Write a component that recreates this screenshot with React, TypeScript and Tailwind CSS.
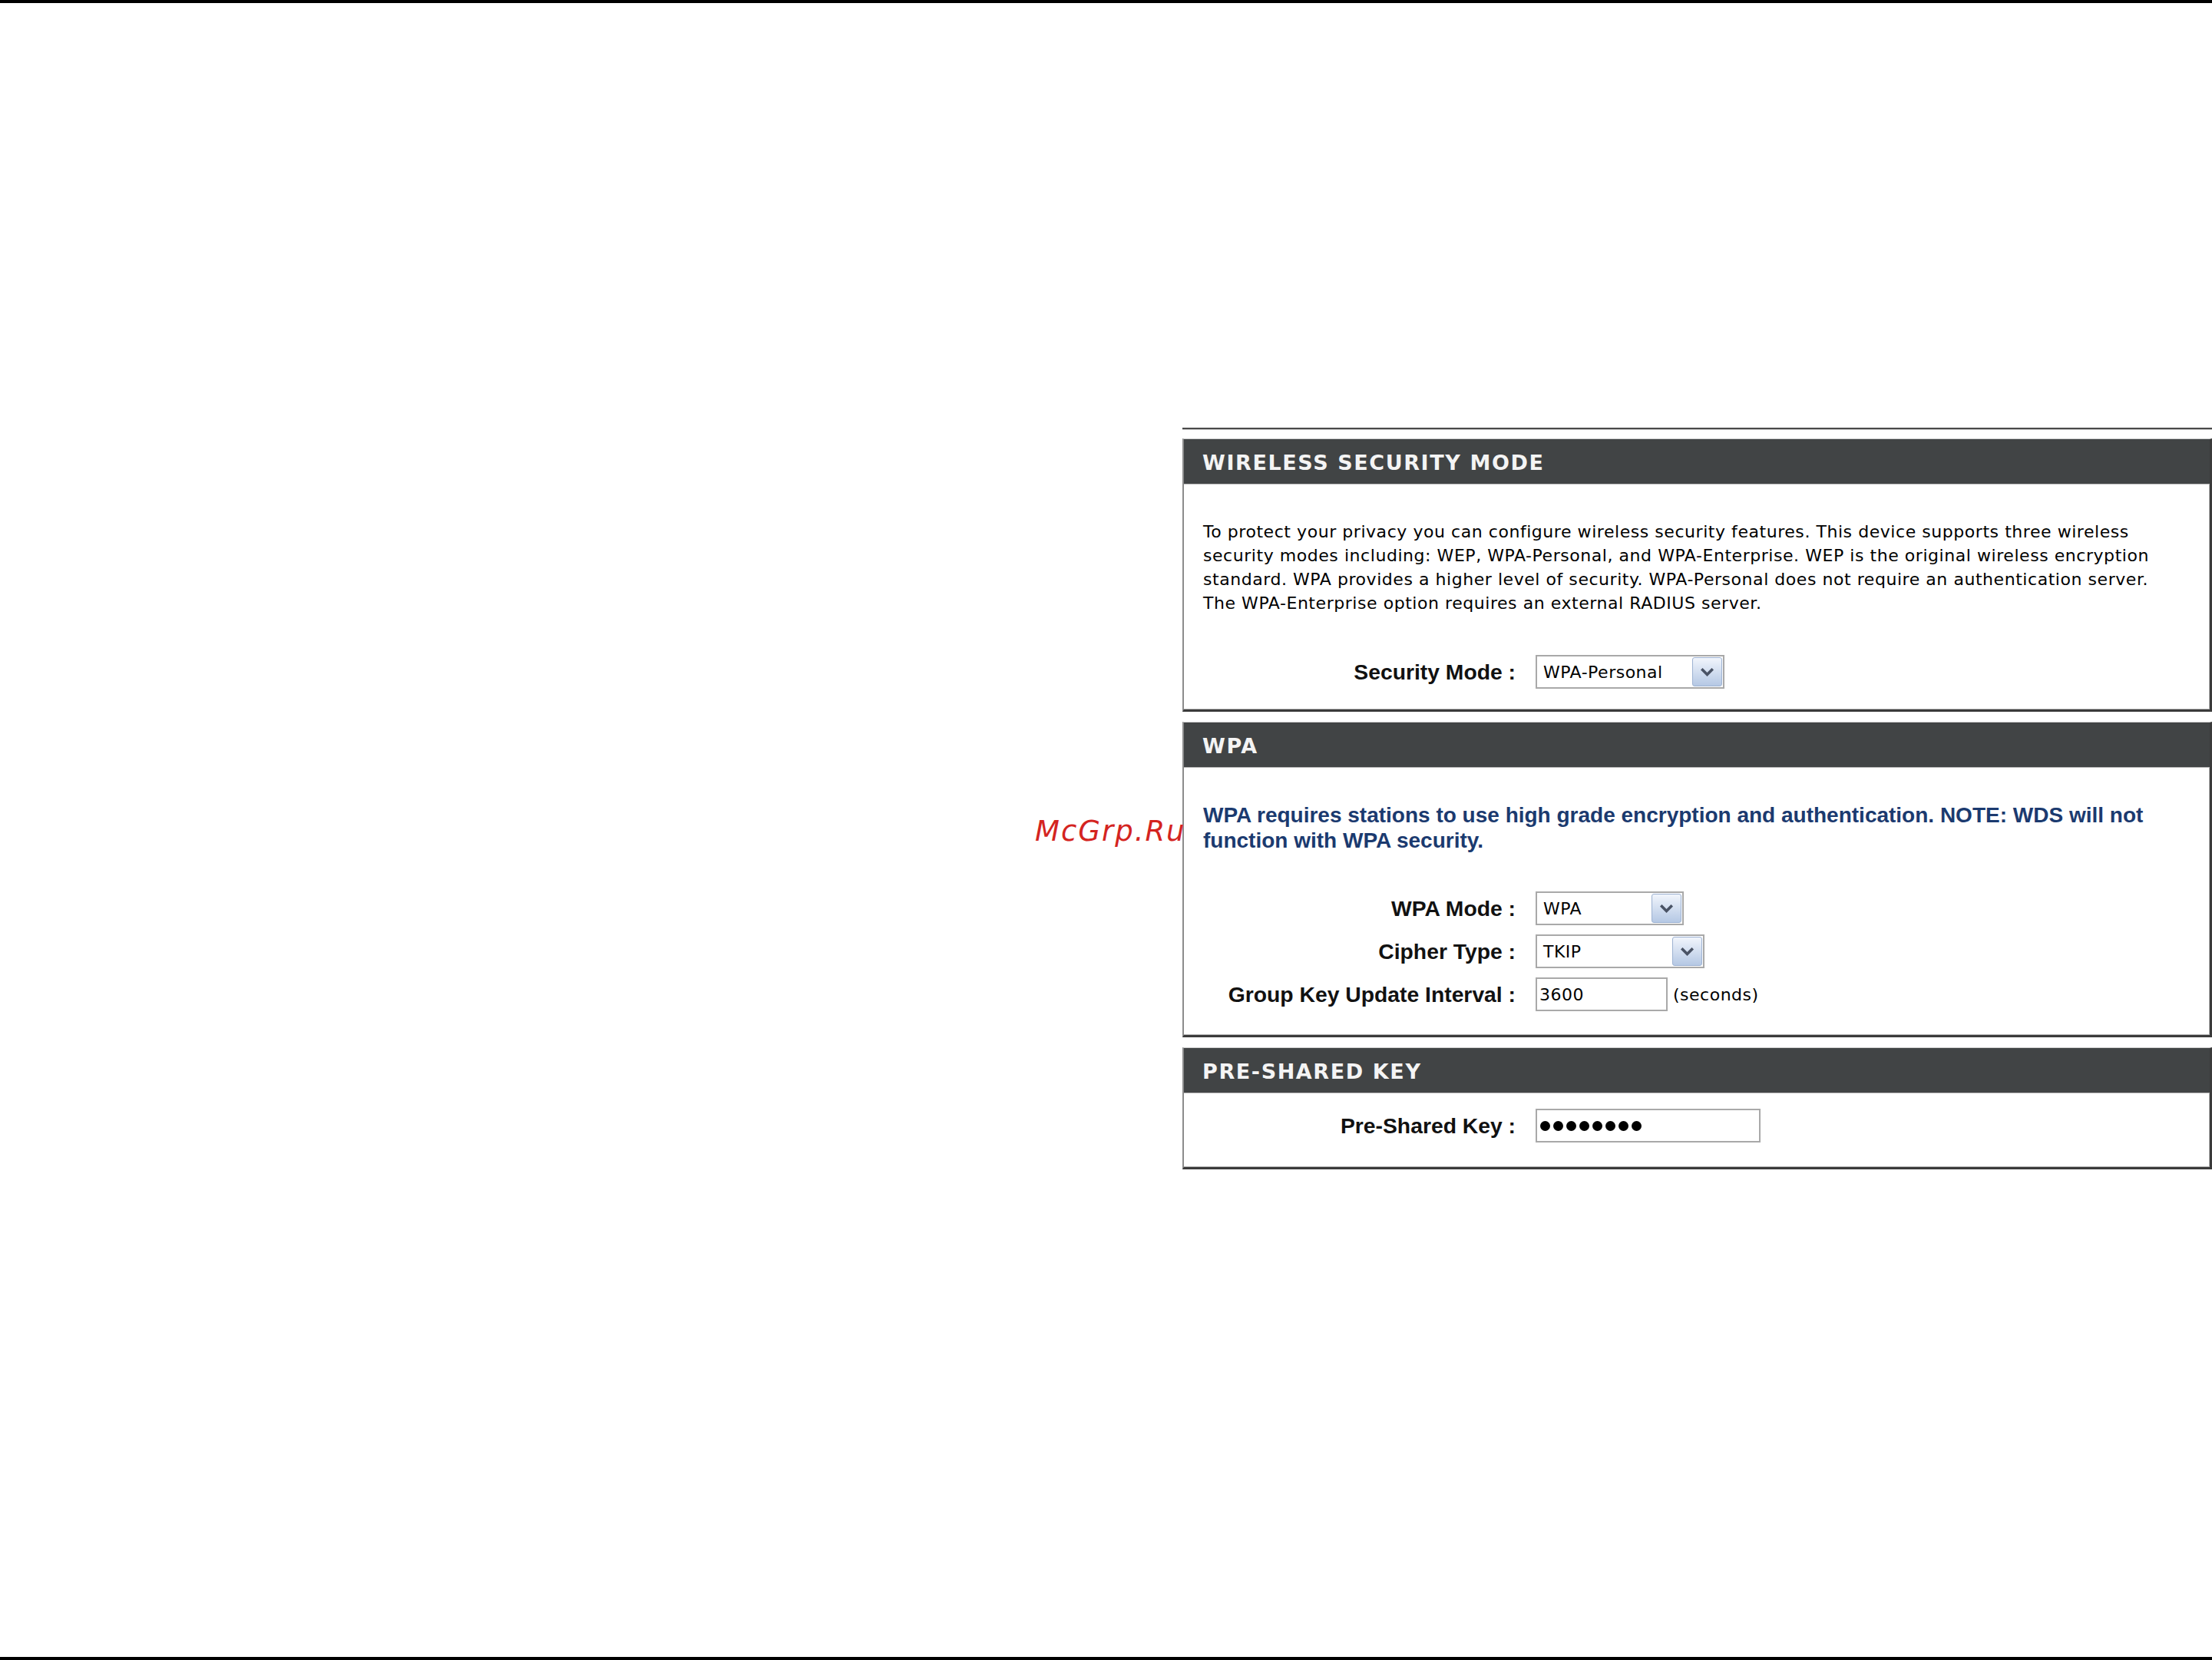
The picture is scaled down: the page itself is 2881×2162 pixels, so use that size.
import React from "react";

const SANS = "font-['DejaVu_Sans','Liberation_Sans',sans-serif]";
const LABEL = "font-['Liberation_Sans',Arial,sans-serif] font-bold text-[28.3px] text-[#111111] text-right leading-none";

function Chevron() {
  return (
    <svg width="17" height="11" viewBox="0 0 17 11" aria-hidden="true">
      <path d="M2.5 2.5 L8.5 8.5 L14.5 2.5" fill="none" stroke="#4a5365" strokeWidth="3.6" strokeLinecap="square" />
    </svg>
  );
}

function SelectBox({ value, className }: { value: string; className: string }) {
  return (
    <div className={`${className} h-[44px] border-2 border-[#a9a9a9] bg-white flex items-stretch p-[1px]`}>
      <span className={`flex-1 flex items-center pl-[7px] text-[22px] tracking-[0.5px] text-black ${SANS}`}>{value}</span>
      <span className="w-[39px] rounded-[3px] border border-[#9db2d2] bg-gradient-to-b from-[#f1f5fc] to-[#b5c8e4] flex items-center justify-center">
        <Chevron />
      </span>
    </div>
  );
}

function TextBox({ className, children }: { className: string; children: React.ReactNode }) {
  return (
    <div className={`${className} h-[44px] border-2 border-[#a9a9a9] bg-white flex items-center text-[22px] tracking-[0.5px] text-black ${SANS}`}>
      {children}
    </div>
  );
}

function Panel({ title, bodyClass, children }: { title: string; bodyClass: string; children: React.ReactNode }) {
  return (
    <section className="border-t border-t-[#cfcfcf] border-l-2 border-l-[#8c8c8c] border-r-[3px] border-r-[#3b3b3b] border-b-[3px] border-b-[#3b3b3b] shadow-[inset_-1px_-1px_0_#b3b3b3] bg-white">
      <h2 className={`h-[59px] bg-[#414445] border-b border-b-[#b9b9b9] flex items-center pl-[24px] pt-[4px] text-[27px] font-bold tracking-[1.6px] text-[#f4f4f4] ${SANS}`}>
        {title}
      </h2>
      <div className={bodyClass}>{children}</div>
    </section>
  );
}

function Row({ label, children }: { label: string; children: React.ReactNode }) {
  return (
    <div className="grid grid-cols-[432px_1fr] gap-x-[26px] items-center">
      <span className={LABEL}>{label}</span>
      <div className="flex items-center">{children}</div>
    </div>
  );
}

export default function App() {
  return (
    <div className="relative w-[2881px] h-[2162px] bg-white flex flex-col overflow-hidden">
      <div className="h-[4px] bg-black" />

      <main className="flex-1 grid grid-cols-[1540px_1fr]">
        <div />
        <div className="pt-[553px] flex flex-col">
          <div className="h-[2px] bg-[#4a4a4a] shadow-[0_1px_0_#c6c6c6]" />

          <div className="mt-[12px] flex flex-col gap-[13px]">
            <Panel title="WIRELESS SECURITY MODE" bodyClass="pt-[46px] pb-[27px]">
              <p className={`px-[25px] text-[22px] leading-[31px] tracking-[0.55px] text-black ${SANS}`}>
                To protect your privacy you can configure wireless security features. This device supports three wireless
                <br />
                security modes including: WEP, WPA-Personal, and WPA-Enterprise. WEP is the original wireless encryption
                <br />
                standard. WPA provides a higher level of security. WPA-Personal does not require an authentication server.
                <br />
                The WPA-Enterprise option requires an external RADIUS server.
              </p>
              <div className="mt-[52px]">
                <Row label="Security Mode :">
                  <SelectBox value="WPA-Personal" className="w-[246px]" />
                </Row>
              </div>
            </Panel>

            <Panel title="WPA" bodyClass="pt-[45px] pb-[31px]">
              <p className="px-[25px] font-['Liberation_Sans',Arial,sans-serif] font-bold text-[28px] leading-[33px] text-[#1b3a6f]">
                WPA requires stations to use high grade encryption and authentication. NOTE: WDS will not
                <br />
                function with WPA security.
              </p>
              <div className="mt-[50px] flex flex-col gap-[12px]">
                <Row label="WPA Mode :">
                  <SelectBox value="WPA" className="w-[193px]" />
                </Row>
                <Row label="Cipher Type :">
                  <SelectBox value="TKIP" className="w-[220px]" />
                </Row>
                <Row label="Group Key Update Interval :">
                  <TextBox className="w-[172px] pl-[3px]">3600</TextBox>
                  <span className={`ml-[7px] text-[22px] tracking-[0.5px] text-black ${SANS}`}>(seconds)</span>
                </Row>
              </div>
            </Panel>

            <Panel title="PRE-SHARED KEY" bodyClass="pt-[20px] pb-[32px]">
              <Row label="Pre-Shared Key :">
                <TextBox className="w-[293px] pl-[4px] gap-[4px]">
                  {Array.from({ length: 8 }).map((_, i) => (
                    <span key={i} className="w-[13px] h-[13px] rounded-full bg-black" />
                  ))}
                </TextBox>
              </Row>
            </Panel>
          </div>
        </div>
      </main>

      <div className="h-[4px] bg-black" />

      <span className={`absolute left-[1348px] top-[1064px] text-[37px] leading-none italic tracking-[2px] text-[#d4241f] ${SANS}`}>
        McGrp.Ru
      </span>
    </div>
  );
}
